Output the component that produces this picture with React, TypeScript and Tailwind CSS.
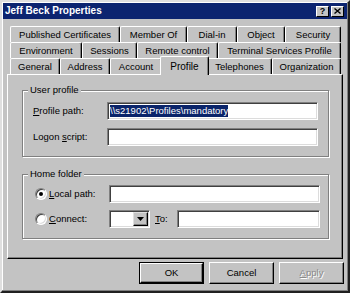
import React from "react";

const font = { fontFamily: '"Liberation Sans", Arial, sans-serif' };

type Tab = { label: string; w: string; selected?: boolean };

const row1: Tab[] = [
  { label: "Published Certificates", w: "w-[110px]" },
  { label: "Member Of", w: "w-[67px]" },
  { label: "Dial-in", w: "w-[50px]" },
  { label: "Object", w: "w-[48px]" },
  { label: "Security", w: "w-[56px]" },
];
const row2: Tab[] = [
  { label: "Environment", w: "w-[72px]" },
  { label: "Sessions", w: "w-[55px]" },
  { label: "Remote control", w: "w-[81px]" },
  { label: "Terminal Services Profile", w: "w-[123px]" },
];
const row3: Tab[] = [
  { label: "General", w: "w-[50px]" },
  { label: "Address", w: "w-[50px]" },
  { label: "Account", w: "w-[52px]" },
  { label: "Profile", w: "w-[49px]", selected: true },
  { label: "Telephones", w: "w-[65px]" },
  { label: "Organization", w: "w-[69px]" },
];

function TabRow({ tabs }: { tabs: Tab[] }) {
  return (
    <div className="flex h-[16px] pl-[8px] items-start">
      {tabs.map((t) =>
        t.selected ? (
          <div
            key={t.label}
            className={`${t.w} relative z-10 -mt-[2px] -mx-[2px] h-[19px] bg-[#c3c3c3] border-t border-l border-t-white border-l-white border-r border-r-black shadow-[inset_-1px_0_0_#808080] rounded-t-[2px] flex items-start justify-center pt-[2px] text-[10px] text-black`}
          >
            {t.label}
          </div>
        ) : (
          <div
            key={t.label}
            className={`${t.w} h-[16px] bg-[#c3c3c3] border-t border-l border-t-white border-l-white border-r border-r-black shadow-[inset_-1px_0_0_#808080] rounded-t-[2px] flex items-center justify-center text-[9.5px] text-black leading-none pt-[1px]`}
          >
            {t.label}
          </div>
        )
      )}
    </div>
  );
}

const sunken =
  "bg-white border border-t-[#808080] border-l-[#808080] border-b-white border-r-white shadow-[inset_1px_1px_0_#404040,inset_-1px_-1px_0_#dcdcdc]";

function Radio({ checked }: { checked?: boolean }) {
  return (
    <span
      className={`w-[12px] h-[12px] rounded-full ${sunken} flex items-center justify-center shrink-0`}
    >
      {checked && <span className="w-[4px] h-[4px] rounded-full bg-black" />}
    </span>
  );
}

function Group({
  label,
  className,
  children,
}: {
  label: string;
  className: string;
  children: React.ReactNode;
}) {
  return (
    <div
      className={`relative ml-[14px] w-[307px] border border-[#808080] shadow-[inset_1px_1px_0_#fff,1px_1px_0_#fff] ${className}`}
    >
      <span className="absolute -top-[7px] left-[5px] px-[2px] bg-[#c3c3c3] text-[9.5px] leading-[12px] text-black">
        {label}
      </span>
      {children}
    </div>
  );
}

function Button({
  children,
  def,
  disabled,
}: {
  children: React.ReactNode;
  def?: boolean;
  disabled?: boolean;
}) {
  const inner = (
    <div
      className={`w-full h-full border border-t-white border-l-white border-b-black border-r-black shadow-[inset_-1px_-1px_0_#808080] flex items-center justify-center text-[9.5px] ${
        disabled ? "text-[#8a8a8a] [text-shadow:1px_1px_0_#fff]" : "text-black"
      }`}
    >
      {children}
    </div>
  );
  return def ? (
    <div className="w-[65px] h-[22px] border border-black">{inner}</div>
  ) : (
    <div className="w-[65px] h-[22px]">{inner}</div>
  );
}

export default function App() {
  return (
    <div
      style={font}
      className="w-[350px] h-[293px] overflow-hidden bg-[#c3c3c3] border-[2px] border-t-[#dfdfdf] border-l-[#dfdfdf] border-b-[#202020] border-r-[#202020] shadow-[inset_-1px_-1px_0_#808080,inset_1px_1px_0_#fff] flex flex-col"
    >
      {/* Title bar */}
      <div className="mx-[1px] mt-[1px] h-[16px] bg-[#0c2470] flex items-center justify-between pl-[2px] pr-[3px]">
        <span className="text-white font-bold text-[10px] leading-none">
          Jeff Beck Properties
        </span>
        <div className="flex gap-[2px]">
          <div className="w-[13px] h-[11px] bg-[#c3c3c3] border border-t-white border-l-white border-b-black border-r-black flex items-center justify-center text-[9px] font-bold leading-none text-black">
            ?
          </div>
          <div className="w-[13px] h-[11px] bg-[#c3c3c3] border border-t-white border-l-white border-b-black border-r-black flex items-center justify-center">
            <svg width="7" height="6" viewBox="0 0 7 6">
              <path d="M0.5 0.5 L6.5 5.5 M6.5 0.5 L0.5 5.5" stroke="#000" strokeWidth="1.4" />
            </svg>
          </div>
        </div>
      </div>

      {/* Tabs */}
      <div className="mt-[7px] flex flex-col">
        <TabRow tabs={row1} />
        <TabRow tabs={row2} />
        <TabRow tabs={row3} />
      </div>

      {/* Panel */}
      <div className="ml-[5px] w-[336px] h-[185px] border border-t-white border-l-white border-b-black border-r-black shadow-[inset_-1px_-1px_0_#808080] flex flex-col pt-[15px]">
        <Group label="User profile" className="h-[67px] pt-[11px] flex flex-col gap-[8px]">
          <div className="flex items-center h-[18px] pl-[10px]">
            <span className="w-[74px] text-[9.5px] text-black">
              <span className="underline">P</span>rofile path:
            </span>
            <div className={`w-[211px] h-[18px] ${sunken} flex items-center pl-[2px]`}>
              <span className="bg-[#0a246a] text-white text-[9.5px] leading-[12px] px-[0px]">
                \\s21902\Profiles\mandatory
              </span>
            </div>
          </div>
          <div className="flex items-center h-[18px] pl-[10px]">
            <span className="w-[74px] text-[9.5px] text-black">
              Logon <span className="underline">s</span>cript:
            </span>
            <div className={`w-[211px] h-[18px] ${sunken}`} />
          </div>
        </Group>

        <Group label="Home folder" className="mt-[17px] h-[65px] pt-[10px] flex flex-col gap-[7px]">
          <div className="flex items-center h-[18px] pl-[12px]">
            <Radio checked />
            <span className="ml-[2px] w-[60px] text-[9.5px] text-black">
              <span className="underline">L</span>ocal path:
            </span>
            <div className={`w-[211px] h-[18px] ${sunken}`} />
          </div>
          <div className="flex items-center h-[18px] pl-[12px]">
            <Radio />
            <span className="ml-[2px] w-[60px] text-[9.5px] text-black">
              <span className="underline">C</span>onnect:
            </span>
            <div className={`w-[41px] h-[18px] ${sunken} flex justify-end p-[1px]`}>
              <div className="w-[15px] h-full bg-[#c3c3c3] border border-t-[#dfdfdf] border-l-[#dfdfdf] border-b-black border-r-black shadow-[inset_-1px_-1px_0_#808080] flex items-center justify-center">
                <svg width="7" height="4" viewBox="0 0 7 4">
                  <path d="M0 0 H7 L3.5 4 Z" fill="#000" />
                </svg>
              </div>
            </div>
            <span className="ml-[5px] w-[22px] text-[9.5px] text-black">
              <span className="underline">T</span>o:
            </span>
            <div className={`w-[143px] h-[18px] ${sunken}`} />
          </div>
        </Group>
      </div>

      {/* Buttons */}
      <div className="mt-[3px] flex justify-end gap-[5px] pr-[4px]">
        <Button def>OK</Button>
        <Button>Cancel</Button>
        <Button disabled>
          <span>
            <span className="underline">A</span>pply
          </span>
        </Button>
      </div>
    </div>
  );
}
